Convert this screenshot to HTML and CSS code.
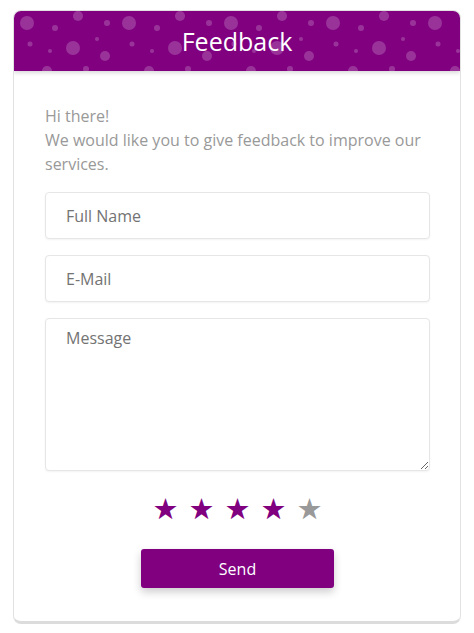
FILE: index.html
```html
<!DOCTYPE html>
<html>
	<head>
		<meta charset="UTF-8">
		<title>Feedback</title>
		<link rel="stylesheet" href="styles.css">
	</head>
	<body>
		<div class="card">
			<div class="head">
				<svg class="bubbles" width="100%" height="100%">
					<defs>
						<pattern id="dots" x="0" y="0" width="102" height="60" patternUnits="userSpaceOnUse">
							<circle cx="13" cy="12" r="7" />
							<circle cx="41" cy="17" r="3" />
							<circle cx="64" cy="5" r="5" />
							<circle cx="93" cy="12" r="3" />
							<circle cx="16" cy="33" r="2.5" />
							<circle cx="36" cy="40" r="2" />
							<circle cx="59" cy="37" r="7" />
							<circle cx="83" cy="28" r="2" />
							<circle cx="91" cy="45" r="5" />
							<circle cx="33" cy="60" r="5" />
							<circle cx="72" cy="58" r="3" />
						</pattern>
					</defs>
					<rect width="100%" height="100%" fill="url(#dots)" />
				</svg>
				<h1>Feedback</h1>
			</div>
			<div class="body">
				<p class="intro">Hi there!<br>We would like you to give feedback to improve our services.</p>
				<input type="text" class="field" placeholder="Full Name">
				<input type="text" class="field" placeholder="E-Mail">
				<textarea class="field msg" placeholder="Message"></textarea>
				<div class="stars">
					<span class="on">&#9733;</span>
					<span class="on">&#9733;</span>
					<span class="on">&#9733;</span>
					<span class="on">&#9733;</span>
					<span>&#9733;</span>
				</div>
				<button class="send">Send</button>
			</div>
		</div>
	</body>
</html>
```
FILE: styles.css
```css
body{
	margin: 0;
	padding: 10px 13px;
	background: #fff;
	font-family: "Open Sans", "Liberation Sans", sans-serif;
}
.card{
	border: 1px solid #e2e2e2;
	border-bottom: 3px solid #dcdcdc;
	border-radius: 8px;
	overflow: hidden;
	background: #fff;
}
.head{
	position: relative;
	height: 60px;
	background: #800080;
	box-shadow: 0 2px 4px rgba(0,0,0,0.15);
}
.bubbles{
	position: absolute;
	left: 0;
	top: 0;
	fill: rgba(255,255,255,0.2);
}
.head h1{
	position: relative;
	margin: 0;
	line-height: 60px;
	text-align: center;
	color: #fff;
	font-size: 25px;
	font-weight: 400;
}
.body{
	display: flex;
	flex-direction: column;
	padding: 33px 30px 33px 31px;
}
.intro{
	margin: 0 0 16px;
	font-size: 16px;
	line-height: 24px;
	color: #999;
}
.field{
	box-sizing: border-box;
	height: 47px;
	margin-bottom: 16px;
	padding: 0 20px;
	border: 1px solid #e6e6e6;
	border-radius: 4px;
	box-shadow: 0 1px 2px rgba(0,0,0,0.05);
	font-family: inherit;
	font-size: 16px;
	color: #555;
}
.field::placeholder{
	color: #737373;
}
.msg{
	height: 153px;
	margin-bottom: 22px;
	padding-top: 8px;
	resize: vertical;
}
.stars{
	display: flex;
	justify-content: center;
	gap: 10px;
	font-size: 29px;
	line-height: 32px;
	color: #999;
	font-family: "DejaVu Sans", sans-serif;
}
.stars .on{
	color: #800080;
}
.send{
	align-self: center;
	width: 193px;
	height: 39px;
	margin-top: 24px;
	border: none;
	border-radius: 3px;
	background: #800080;
	color: #fff;
	font-family: inherit;
	font-size: 16px;
	box-shadow: 0 4px 8px rgba(0,0,0,0.2);
}
```
